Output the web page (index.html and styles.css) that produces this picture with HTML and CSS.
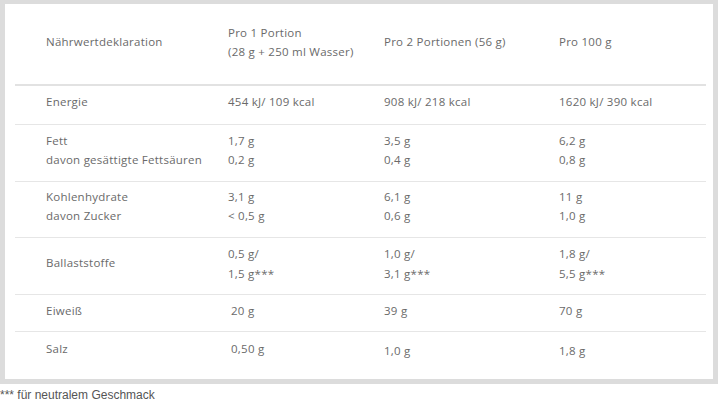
FILE: index.html
```html
<!DOCTYPE html>
<html lang="de">
<head>
<meta charset="utf-8">
<link rel="stylesheet" href="styles.css">
</head>
<body>
<div class="frame">
  <div class="row head">
    <div class="cell">Nährwertdeklaration</div>
    <div class="cell">Pro 1 Portion<br>(28 g + 250 ml Wasser)</div>
    <div class="cell">Pro 2 Portionen (56 g)</div>
    <div class="cell">Pro 100 g</div>
  </div>
  <div class="row r-energie">
    <div class="cell">Energie</div>
    <div class="cell">454 kJ/ 109 kcal</div>
    <div class="cell">908 kJ/ 218 kcal</div>
    <div class="cell">1620 kJ/ 390 kcal</div>
  </div>
  <div class="row r-fett">
    <div class="cell">Fett<br>davon gesättigte Fettsäuren</div>
    <div class="cell">1,7 g<br>0,2 g</div>
    <div class="cell">3,5 g<br>0,4 g</div>
    <div class="cell">6,2 g<br>0,8 g</div>
  </div>
  <div class="row r-kh">
    <div class="cell">Kohlenhydrate<br>davon Zucker</div>
    <div class="cell">3,1 g<br>&lt; 0,5 g</div>
    <div class="cell">6,1 g<br>0,6 g</div>
    <div class="cell">11 g<br>1,0 g</div>
  </div>
  <div class="row r-ball">
    <div class="cell label-mid">Ballaststoffe</div>
    <div class="cell">0,5 g/<br>1,5 g***</div>
    <div class="cell">1,0 g/<br>3,1 g***</div>
    <div class="cell">1,8 g/<br>5,5 g***</div>
  </div>
  <div class="row r-eiweiss">
    <div class="cell">Eiweiß</div>
    <div class="cell indent">20 g</div>
    <div class="cell">39 g</div>
    <div class="cell">70 g</div>
  </div>
  <div class="row r-salz last">
    <div class="cell">Salz</div>
    <div class="cell indent">0,50 g</div>
    <div class="cell low">1,0 g</div>
    <div class="cell low">1,8 g</div>
  </div>
</div>
<p class="note">*** für neutralem Geschmack</p>
</body>
</html>
```

FILE: styles.css
```css
html, body {
  margin: 0;
  padding: 0;
  background: #fff;
}

.frame {
  box-sizing: border-box;
  width: 718px;
  height: 384px;
  border: 5px solid #dcdcdc;
  border-top-width: 4px;
  background: #fff;
}

.row {
  box-sizing: border-box;
  display: grid;
  grid-template-columns: 182px 156px 175px 1fr;
  margin: 0 7px 0 10px;
  padding-left: 31px;
  border-bottom: 1px solid #e6e6e6;
  font-family: "Open Sans", "DejaVu Sans", sans-serif;
  font-size: 11.5px;
  letter-spacing: 0.25px;
  line-height: 19px;
  color: #6a6a6a;
  align-items: start;
}

.head {
  height: 82px;
  border-bottom: 2px solid #e2e2e2;
  align-items: center;
  padding-bottom: 5px;
}

.cell {
  white-space: nowrap;
}

.r-energie { height: 39px; padding-top: 6px; }
.r-fett { height: 57px; padding-top: 6px; }
.r-kh { height: 56px; padding-top: 5px; }
.r-ball { height: 57px; padding-top: 6px; line-height: 20px; }
.r-eiweiss { height: 37px; padding-top: 6px; }
.r-salz { height: 47px; padding-top: 7px; }

.last { border-bottom: none; }

.label-mid { padding-top: 9px; line-height: 19px; }
.indent { padding-left: 3px; }
.low { padding-top: 2px; }

.note {
  margin: 3px 0 0 0;
  font-family: "Liberation Sans", Arial, sans-serif;
  font-size: 12px;
  line-height: 16px;
  color: #555;
}
```
